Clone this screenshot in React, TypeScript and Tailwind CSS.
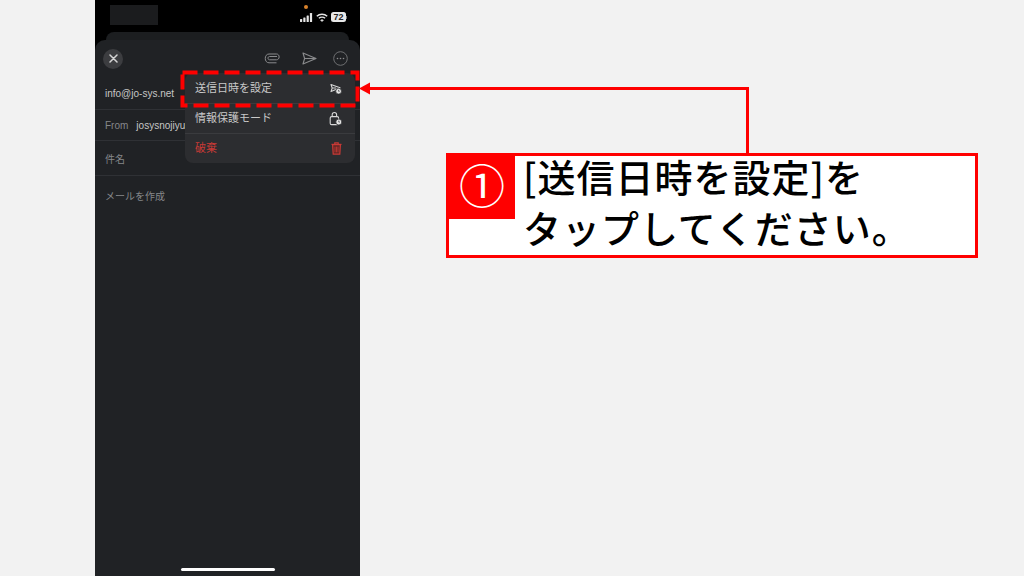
import React from "react";

const jp = "font-['Liberation_Sans','Noto_Sans_CJK_JP',sans-serif]";

const StatusIcons = () => (
  <div className="flex items-center text-[#e5e5e5]">
    <svg className="mr-[3px]" width="13" height="9" viewBox="0 0 13 9" fill="currentColor">
      <rect x="0" y="6" width="2.2" height="3" rx="0.5" />
      <rect x="3.3" y="4.4" width="2.2" height="4.6" rx="0.5" />
      <rect x="6.6" y="2.4" width="2.2" height="6.6" rx="0.5" />
      <rect x="9.9" y="0" width="2.2" height="9" rx="0.5" />
    </svg>
    <svg className="mr-[3px]" width="12" height="9" viewBox="0 0 12 9" fill="none" stroke="currentColor" strokeWidth="1.5">
      <path d="M0.8 3.2C3.7 0.5 8.3 0.5 11.2 3.2" />
      <path d="M2.9 5.3C4.6 3.8 7.4 3.8 9.1 5.3" />
      <path d="M6 8.6L4.6 7.2C5.4 6.6 6.6 6.6 7.4 7.2Z" fill="currentColor" strokeWidth="0.6" />
    </svg>
    <div className="flex items-center">
      <div className="w-[15px] h-[10px] rounded-[2.5px] bg-[#e8e8e8] flex items-center justify-center text-[9px] leading-none font-bold text-[#222]">
        72
      </div>
      <div className="w-[1px] h-[3px] bg-[#777]" />
    </div>
  </div>
);

const SendLater = () => (
  <svg width="12" height="12" viewBox="0 0 12 12" fill="none">
    <path d="M1 1.5L10 4.8L1 8.6L2.2 5Z" stroke="#d8d8d8" strokeWidth="1.1" strokeLinejoin="round" />
    <path d="M2.2 5H6" stroke="#d8d8d8" strokeWidth="1" />
    <circle cx="8.6" cy="8.2" r="2.9" fill="#e4e4e4" stroke="#2c2d30" strokeWidth="0.8" />
    <path d="M8.6 6.9V8.3H9.6" stroke="#2c2d30" strokeWidth="0.7" />
  </svg>
);

const LockLater = () => (
  <svg width="13" height="15" viewBox="0 0 13 15" fill="none">
    <rect x="1.2" y="5.6" width="8.4" height="8" rx="1.4" stroke="#d8d8d8" strokeWidth="1.1" />
    <path d="M3.2 5.6V3.6C3.2 0.8 7.6 0.8 7.6 3.6V5.6" stroke="#d8d8d8" strokeWidth="1.1" />
    <circle cx="9.8" cy="11" r="3" fill="#e4e4e4" stroke="#2c2d30" strokeWidth="0.8" />
    <path d="M9.8 9.6V11.1H10.8" stroke="#2c2d30" strokeWidth="0.7" />
  </svg>
);

const Trash = () => (
  <svg width="11" height="13" viewBox="0 0 11 13" fill="none" stroke="#c93a36" strokeWidth="1.2">
    <path d="M0.5 2.4H10.5" />
    <path d="M3.8 2.2V0.9H7.2V2.2" />
    <path d="M1.6 2.6L2.2 12.2H8.8L9.4 2.6Z" fill="#5a2624" />
    <path d="M4 4.6V10.4M5.5 4.6V10.4M7 4.6V10.4" strokeWidth="0.8" />
  </svg>
);

const MenuRow = ({ label, red, children }: { label: string; red?: boolean; children: React.ReactNode }) => (
  <div className="h-[30px] last:h-[29px] pl-[10px] pr-[13px] flex items-center justify-between border-b border-[#3a3b3e] last:border-b-0">
    <span className={`text-[11px] ${red ? "text-[#c93a36]" : "text-[#c9c9c9]"}`}>{label}</span>
    {children}
  </div>
);

export default function App() {
  return (
    <div className={`relative w-[1024px] h-[576px] overflow-hidden bg-[#f2f2f2] ${jp}`}>
      {/* phone screen */}
      <div className="ml-[95px] w-[265px] h-[576px] bg-black flex flex-col">
        <div className="h-[32px] flex justify-between pl-[15px] pr-[13px] pt-[5px]">
          <div className="w-[48px] h-[20px] bg-[#1b1c1e]" />
          <div className="relative pt-[7px]">
            <div className="absolute left-[4px] top-0 w-[4px] h-[4px] rounded-full bg-[#d9822b]" />
            <StatusIcons />
          </div>
        </div>
        <div className="mx-[11px] h-[8px] rounded-t-[8px] bg-[#1c1e20]" />
        <div className="flex-1 rounded-t-[10px] bg-[#202225] flex flex-col text-[10px] text-[#c6c6c6]">
          <div className="h-[37px] pl-[8px] pr-[12px] flex items-center justify-between">
            <div className="w-[20px] h-[20px] rounded-full bg-[#3c3d40] flex items-center justify-center">
              <svg width="9" height="9" viewBox="0 0 9 9" stroke="#d4d4d4" strokeWidth="1.5" strokeLinecap="round">
                <path d="M1 1L8 8M8 1L1 8" />
              </svg>
            </div>
            <div className="flex items-center">
              <svg className="mr-[21px]" width="17" height="11" viewBox="0 0 16 11" fill="none" stroke="#8a8b8d" strokeWidth="1">
                <path d="M12.5 3.5L5 3.5C3 3.5 3 6.8 5 6.8L12 6.8C15.5 6.8 15.5 1 12 1L4.5 1C-0.5 1 -0.5 9.8 4.5 9.8L12 9.8" />
              </svg>
              <svg className="mr-[16px]" width="15" height="13" viewBox="0 0 15 13" fill="none" stroke="#8a8b8d" strokeWidth="1.1" strokeLinejoin="round">
                <path d="M1 1L14 6.5L1 12L2.6 6.5Z" />
                <path d="M2.6 6.5H14" />
              </svg>
              <svg width="15" height="15" viewBox="0 0 15 15" fill="none">
                <circle cx="7.5" cy="7.5" r="6.8" stroke="#6f7072" strokeWidth="1" />
                <circle cx="4.5" cy="7.5" r="0.8" fill="#8a8b8d" />
                <circle cx="7.5" cy="7.5" r="0.8" fill="#8a8b8d" />
                <circle cx="10.5" cy="7.5" r="0.8" fill="#8a8b8d" />
              </svg>
            </div>
          </div>
          <div className="h-[33px] pl-[10px] flex items-center border-b border-[#2f3135]">info@jo-sys.net</div>
          <div className="h-[31px] pl-[10px] flex items-center gap-[8px] border-b border-[#2f3135]">
            <span className="text-[#85878a]">From</span>
            <span>josysnojiyu</span>
          </div>
          <div className="h-[35px] pl-[10px] pt-[2px] flex items-center border-b border-[#2f3135] text-[#85878a]">件名</div>
          <div className="pl-[10px] pt-[13px] text-[#85878a]">メールを作成</div>
          <div className="mt-auto mb-[5px] mx-auto w-[94px] h-[3px] rounded-full bg-white" />
        </div>
      </div>

      {/* popup menu */}
      <div className="absolute left-[185px] top-[73px] w-[170px] pt-[1px] rounded-[8px] bg-[#2c2d30]">
        <MenuRow label="送信日時を設定">
          <SendLater />
        </MenuRow>
        <MenuRow label="情報保護モード">
          <LockLater />
        </MenuRow>
        <MenuRow label="破棄" red>
          <Trash />
        </MenuRow>
      </div>

      {/* dashed highlight */}
      <svg className="absolute left-[180px] top-[70px]" width="180" height="38" fill="none">
        <rect x="2.5" y="2.5" width="175" height="33" stroke="#ff0000" strokeWidth="4" strokeDasharray="15 6" />
      </svg>

      {/* arrow */}
      <svg className="absolute left-[358px] top-[80px]" width="394" height="76" fill="none">
        <path d="M10 8.5H389.5V75" stroke="#ff0000" strokeWidth="3" />
        <path d="M1 8.5L12 2.5V14.5Z" fill="#ff0000" />
      </svg>

      {/* callout */}
      <div className="absolute left-[446px] top-[153px] w-[532px] h-[105px] border-[3px] border-[#ff0000] bg-white flex items-start font-['Noto_Sans_CJK_JP',sans-serif]">
        <div className="w-[66px] h-[63px] pb-[10px] shrink-0 bg-[#ff0000] flex items-center justify-center text-white text-[46px] leading-none">
          ①
        </div>
        <div className="pl-[8px] text-[38px] leading-[51px] font-medium tracking-[1px] text-black -mt-[6px] whitespace-nowrap">
          <div>[送信日時を設定]を</div>
          <div>タップしてください。</div>
        </div>
      </div>
    </div>
  );
}
